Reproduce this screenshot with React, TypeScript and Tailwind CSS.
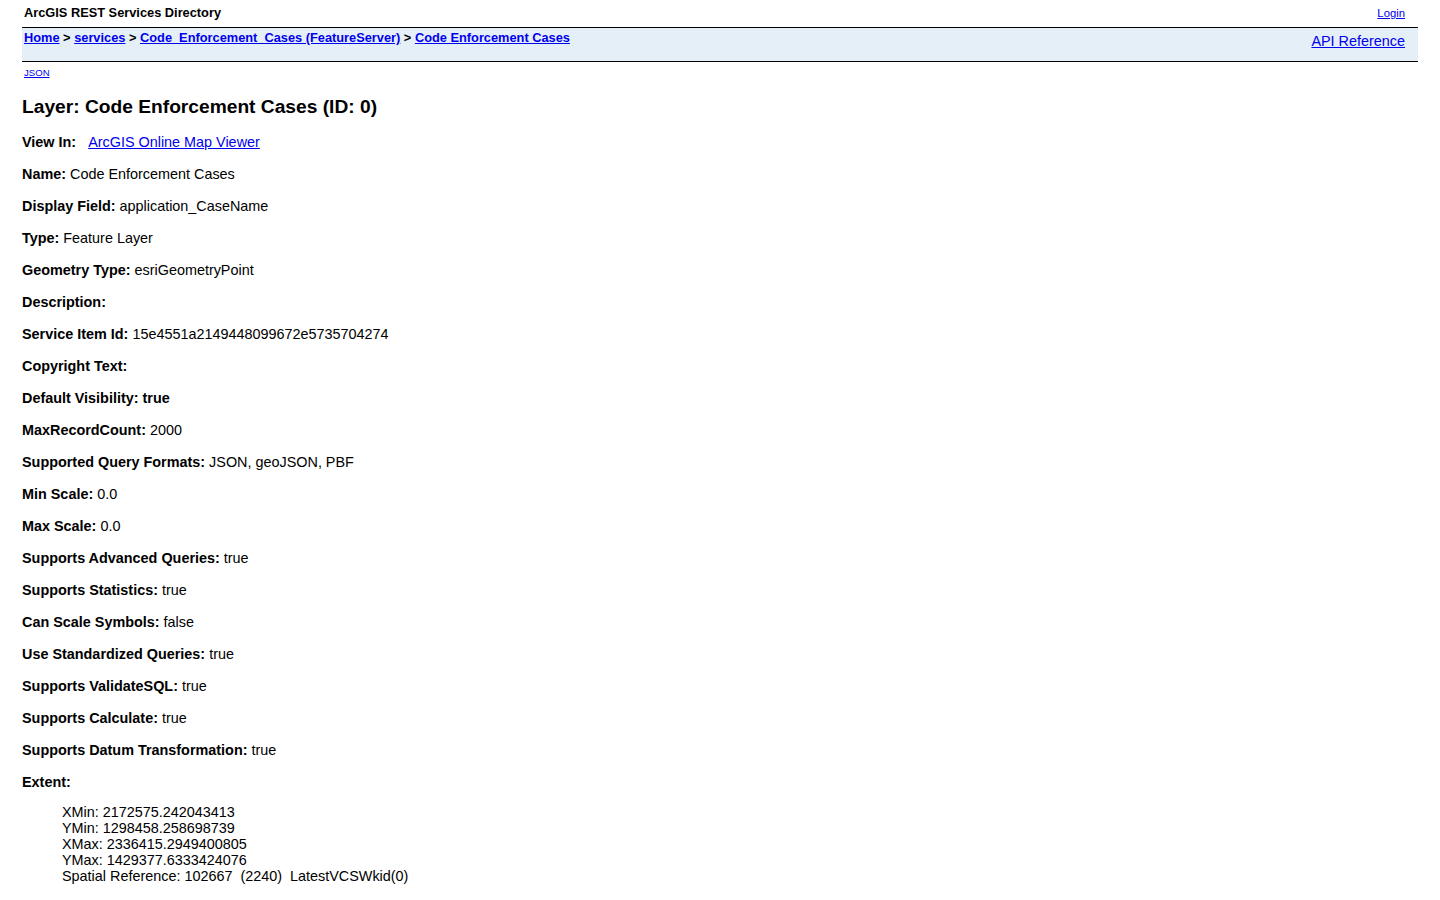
import React from 'react';

const rows: { label: string; value?: string; boldValue?: boolean }[] = [
  { label: 'Name:', value: 'Code Enforcement Cases' },
  { label: 'Display Field:', value: 'application_CaseName' },
  { label: 'Type:', value: 'Feature Layer' },
  { label: 'Geometry Type:', value: 'esriGeometryPoint' },
  { label: 'Description:' },
  { label: 'Service Item Id:', value: '15e4551a2149448099672e5735704274' },
  { label: 'Copyright Text:' },
  { label: 'Default Visibility:', value: 'true', boldValue: true },
  { label: 'MaxRecordCount:', value: '2000' },
  { label: 'Supported Query Formats:', value: 'JSON, geoJSON, PBF' },
  { label: 'Min Scale:', value: '0.0' },
  { label: 'Max Scale:', value: '0.0' },
  { label: 'Supports Advanced Queries:', value: 'true' },
  { label: 'Supports Statistics:', value: 'true' },
  { label: 'Can Scale Symbols:', value: 'false' },
  { label: 'Use Standardized Queries:', value: 'true' },
  { label: 'Supports ValidateSQL:', value: 'true' },
  { label: 'Supports Calculate:', value: 'true' },
  { label: 'Supports Datum Transformation:', value: 'true' },
];

const extent = [
  'XMin: 2172575.242043413',
  'YMin: 1298458.258698739',
  'XMax: 2336415.2949400805',
  'YMax: 1429377.6333424076',
];

const link = 'text-[#0000ee] underline';

export default function App() {
  return (
    <div className="min-h-screen bg-white text-black px-[22px] font-['Liberation_Sans',Arial,sans-serif]">
      {/* header */}
      <div className="flex items-start justify-between h-[27px] pl-[2px] pr-[13px]">
        <span className="text-[12.8px] font-bold leading-[16px] pt-[5px]">ArcGIS REST Services Directory</span>
        <a href="#" className={`${link} text-[11.3px] leading-[14px] pt-[6px]`}>Login</a>
      </div>
      <div className="border-t-[1px] border-b-[1px] border-black bg-[#e5eff7] h-[35px] flex justify-between pl-[2px] pr-[13px]">
        <div className="text-[12.8px] font-bold leading-[19px]">
          <a href="#" className={link}>Home</a> &gt;{' '}
          <a href="#" className={link}>services</a> &gt;{' '}
          <a href="#" className={link}>Code_Enforcement_Cases (FeatureServer)</a> &gt;{' '}
          <a href="#" className={link}>Code Enforcement Cases</a>
        </div>
        <a href="#" className={`${link} text-[14.4px] leading-[19px] pt-[4px]`}>API Reference</a>
      </div>
      <div className="pl-[2px] pt-[5px] text-[9.6px] leading-[12px]">
        <a href="#" className={link}>JSON</a>
      </div>

      <h2 className="text-[19.2px] font-bold mt-[17px] mb-[16px] leading-[22px]">Layer: Code Enforcement Cases (ID: 0)</h2>

      <div className="text-[14.4px] leading-[16px]">
        <div className="mb-[16px]">
          <b>View In:</b>&nbsp;&nbsp;&nbsp;
          <a href="#" className={link}>ArcGIS Online Map Viewer</a>
        </div>
        {rows.map((r) => (
          <div key={r.label} className="mb-[16px]">
            <b>{r.label}</b>
            {r.value ? ' ' : ''}
            {r.boldValue ? <b>{r.value}</b> : r.value}
          </div>
        ))}
        <div>
          <b>Extent:</b>
        </div>
        <ul className="pl-[40px] mt-[14px]">
          {extent.map((e) => (
            <li key={e}>{e}</li>
          ))}
          <li className="whitespace-pre">Spatial Reference: 102667  (2240)  LatestVCSWkid(0)</li>
        </ul>
      </div>
    </div>
  );
}
